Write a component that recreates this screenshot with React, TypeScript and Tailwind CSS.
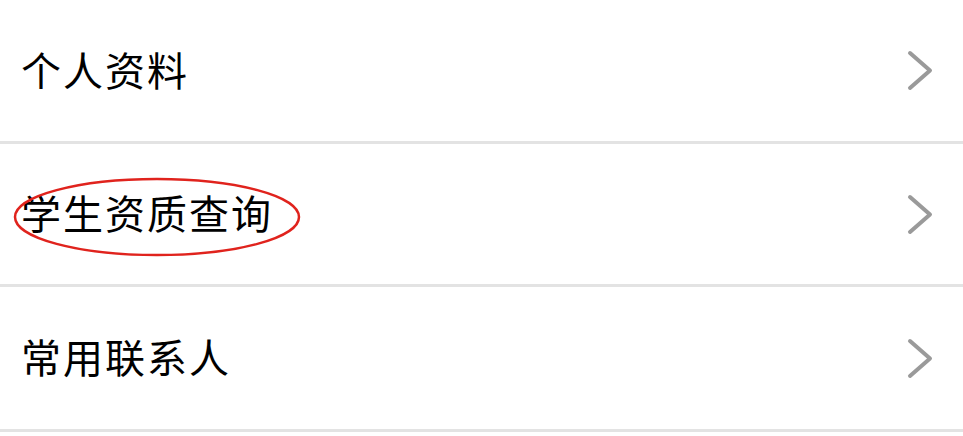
import React from "react";

function Chevron() {
  return (
    <svg width="28" height="41" viewBox="0 0 28 41" fill="none">
      <polyline
        points="4,3 24,20.5 4,38"
        stroke="#9a9a9a"
        strokeWidth="4"
        strokeLinecap="round"
        strokeLinejoin="round"
      />
    </svg>
  );
}

function Row({ label, h, circled }: { label: string; h: string; circled?: boolean }) {
  return (
    <div
      className={`relative flex items-center justify-between box-border border-b-[3px] border-[#e3e3e3] pl-[21px] pr-[29px] ${h}`}
    >
      <span
        className="text-[40px] leading-none font-normal tracking-[2px] text-black -mt-[4px]"
        style={{ fontFamily: '"Noto Sans CJK SC", "Noto Sans", sans-serif' }}
      >
        {label}
      </span>
      <Chevron />
      {circled && (
        <svg
          className="absolute left-[12px] top-[32px]"
          width="290"
          height="82"
          viewBox="0 0 290 82"
          fill="none"
        >
          <ellipse cx="145" cy="41" rx="142" ry="38" stroke="#e0231d" strokeWidth="2.5" />
        </svg>
      )}
    </div>
  );
}

export default function App() {
  return (
    <div className="w-[963px] h-[436px] bg-white overflow-hidden">
      <Row label="个人资料" h="h-[144px]" />
      <Row label="学生资质查询" h="h-[143px]" circled />
      <Row label="常用联系人" h="h-[145px]" />
    </div>
  );
}
